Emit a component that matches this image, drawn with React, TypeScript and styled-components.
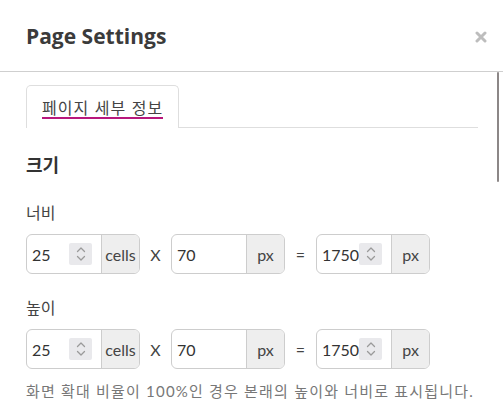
import React from 'react';
import styled, { createGlobalStyle } from 'styled-components';

const GlobalStyle = createGlobalStyle`
  html, body {
    margin: 0;
    padding: 0;
    background: #fff;
  }
  body {
    font-family: Lato, "Noto Sans CJK KR", sans-serif;
    color: #333;
  }
`;

// 입력 그룹 한 줄 데이터
type DimRow = {
  label: string;
  cells: number;
  size: number;
};

const rows: DimRow[] = [
  { label: '너비', cells: 25, size: 70 },
  { label: '높이', cells: 25, size: 70 },
];

function Chevrons() {
  return (
    <svg width="10" height="16" viewBox="0 0 10 16" fill="none">
      <path d="M1.5 5.5 L5 2 L8.5 5.5" stroke="#9a9a9a" strokeWidth="1.3" strokeLinecap="round" strokeLinejoin="round" />
      <path d="M1.5 10.5 L5 14 L8.5 10.5" stroke="#9a9a9a" strokeWidth="1.3" strokeLinecap="round" strokeLinejoin="round" />
    </svg>
  );
}

function CloseIcon() {
  return (
    <svg width="12" height="12" viewBox="0 0 12 12">
      <path d="M2 2 L10 10 M10 2 L2 10" stroke="#bdbdbd" strokeWidth="3" strokeLinecap="round" />
    </svg>
  );
}

function NumberGroup({ value, unit, spinner }: { value: number; unit: string; spinner?: boolean }) {
  return (
    <Group>
      <Field>
        <Value>{value}</Value>
        {spinner && (
          <Spinner>
            <Chevrons />
          </Spinner>
        )}
      </Field>
      <Addon>{unit}</Addon>
    </Group>
  );
}

export default function App() {
  return (
    <>
      <GlobalStyle />
      <Modal>
        <Header>
          <Title>Page Settings</Title>
          <CloseButton aria-label="close">
            <CloseIcon />
          </CloseButton>
        </Header>
        <Body>
          <Tabs>
            <Tab>
              <TabLabel>페이지 세부 정보</TabLabel>
            </Tab>
          </Tabs>
          <SectionTitle>크기</SectionTitle>
          {rows.map((r) => (
            <DimField key={r.label}>
              <Label>{r.label}</Label>
              <Row>
                <NumberGroup value={r.cells} unit="cells" spinner />
                <Sep>X</Sep>
                <NumberGroup value={r.size} unit="px" />
                <Sep>=</Sep>
                <NumberGroup value={r.cells * r.size} unit="px" spinner />
              </Row>
            </DimField>
          ))}
          <Note>화면 확대 비율이 100%인 경우 본래의 높이와 너비로 표시됩니다.</Note>
        </Body>
        <ScrollThumb />
      </Modal>
    </>
  );
}

const Modal = styled.div`
  position: relative;
  width: 503px;
  height: 420px;
  overflow: hidden;
  background: #fff;
`;

const Header = styled.div`
  height: 71px;
  padding: 0 16px 0 27px;
  display: flex;
  align-items: center;
  justify-content: space-between;
  border-bottom: 1px solid #cfcfcf;
`;

const Title = styled.h1`
  margin: 0 0 0 -1px;
  font-family: "Open Sans", sans-serif;
  font-weight: 700;
  font-size: 21px;
  color: #3b3b3b;
`;

const CloseButton = styled.button`
  border: 0;
  background: none;
  padding: 0;
  display: flex;
  margin-top: 2px;
`;

const Body = styled.div`
  padding: 13px 25px 0 26px;
`;

const Tabs = styled.div`
  display: flex;
  border-bottom: 1px solid #dedede;
`;

const Tab = styled.div`
  width: 153px;
  height: 43px;
  box-sizing: border-box;
  border: 1px solid #dedede;
  border-bottom: none;
  border-radius: 5px 5px 0 0;
  background: #fff;
  margin-bottom: -1px;
  padding: 0 0 0 15px;
  display: flex;
  align-items: center;
`;

const TabLabel = styled.span`
  font-family: "Noto Sans CJK KR", sans-serif;
  font-size: 16px;
  color: #444;
  line-height: 20px;
  border-bottom: 2px solid #b8177c;
  letter-spacing: 1px;
  word-spacing: 1px;
  margin-top: 2px;
`;

const SectionTitle = styled.h2`
  margin: 23px 0 0;
  font-family: "Noto Sans CJK KR", sans-serif;
  font-weight: 700;
  font-size: 18px;
  line-height: 26px;
  color: #333;
`;

const DimField = styled.div`
  margin-top: 23px;
  & + & {
    margin-top: 21px;
  }
`;

const Label = styled.div`
  font-family: "Noto Sans CJK KR", sans-serif;
  font-size: 16px;
  line-height: 24px;
  color: #444;
  margin-bottom: 10px;
`;

const Row = styled.div`
  display: flex;
  align-items: center;
`;

const Group = styled.div`
  display: flex;
  width: 114px;
  height: 40px;
  box-sizing: border-box;
  border: 1px solid #cdcdcd;
  border-radius: 6px;
  overflow: hidden;
  background: #fff;
`;

const Field = styled.div`
  flex: 1;
  display: flex;
  align-items: center;
  justify-content: space-between;
  padding: 0 9px 0 5px;
`;

const Value = styled.span`
  font-family: Lato, sans-serif;
  font-size: 16px;
  color: #333;
`;

const Spinner = styled.span`
  width: 23px;
  height: 22px;
  background: #e9e9ec;
  border-radius: 2px;
  display: flex;
  align-items: center;
  justify-content: center;
`;

const Addon = styled.span`
  width: 37px;
  border-left: 1px solid #cdcdcd;
  background: #eeeeee;
  display: flex;
  align-items: center;
  justify-content: center;
  font-family: Lato, sans-serif;
  font-size: 16px;
  color: #444;
`;

const Sep = styled.span`
  width: 31px;
  text-align: center;
  font-family: Lato, sans-serif;
  font-size: 16px;
  color: #444;
`;

const Note = styled.p`
  margin: 11px 0 0;
  font-family: Lato, "Noto Sans CJK KR", sans-serif;
  font-size: 15px;
  line-height: 22px;
  letter-spacing: 1.2px;
  color: #777;
  white-space: nowrap;
`;

const ScrollThumb = styled.div`
  position: absolute;
  right: 4px;
  top: 72px;
  width: 2px;
  height: 110px;
  background: #8c8787;
  border-radius: 1px;
`;
